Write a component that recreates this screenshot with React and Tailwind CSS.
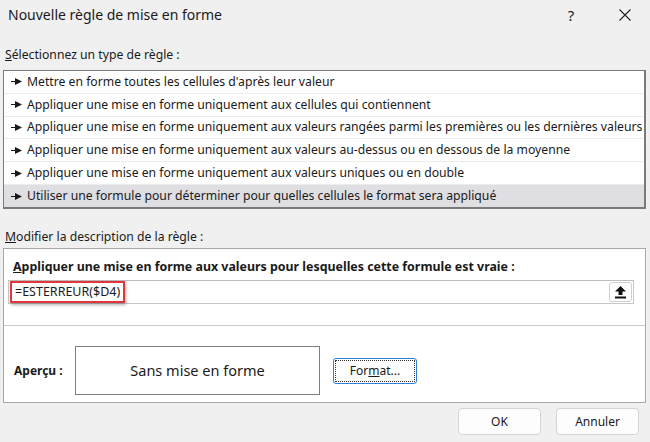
import React from "react";

const rules = [
  "Mettre en forme toutes les cellules d'après leur valeur",
  "Appliquer une mise en forme uniquement aux cellules qui contiennent",
  "Appliquer une mise en forme uniquement aux valeurs rangées parmi les premières ou les dernières valeurs",
  "Appliquer une mise en forme uniquement aux valeurs au-dessus ou en dessous de la moyenne",
  "Appliquer une mise en forme uniquement aux valeurs uniques ou en double",
  "Utiliser une formule pour déterminer pour quelles cellules le format sera appliqué",
];

// little "►" bullet with a stem, as drawn by Excel
const Bullet = () => (
  <svg width="11" height="7" viewBox="0 0 11 7" className="shrink-0">
    <rect x="0" y="3" width="5" height="1" fill="#1a1a1a" />
    <polygon points="4,0 11,3.5 4,7" fill="#1a1a1a" />
  </svg>
);

const UploadIcon = () => (
  <svg width="11" height="13" viewBox="0 0 11 13">
    <polygon points="5.5,0 11,5.5 7.5,5.5 7.5,9 3.5,9 3.5,5.5 0,5.5" fill="#111" />
    <rect x="0" y="10.5" width="11" height="2" fill="#111" />
  </svg>
);

const App = () => {
  return (
    <div className="w-[650px] h-[442px] bg-[#f0f0f0] overflow-hidden text-[#1a1a1a] font-['Noto_Sans','Liberation_Sans',sans-serif]">
      {/* Title bar */}
      <div className="h-[30px] flex items-center pl-[8px]">
        <div className="text-[14px] leading-[20px] flex-1">Nouvelle règle de mise en forme</div>
        <div className="w-[20px] text-center text-[15px] leading-[20px] mr-[38px]">?</div>
        <svg width="12" height="12" viewBox="0 0 12 12" className="mr-[19px]">
          <path d="M0.5 0.5 L11.5 11.5 M11.5 0.5 L0.5 11.5" stroke="#222" strokeWidth="1.1" fill="none" />
        </svg>
      </div>

      {/* Rule type */}
      <div className="h-[40px] pt-[16px] pl-[5px] text-[12.2px] leading-[18px]">
        <span className="underline">S</span>électionnez un type de règle :
      </div>
      <div className="mx-[3px] w-[643px] h-[139px] bg-white border border-[#7a7a7a] border-r-2 border-b-2 flex flex-col">
        {rules.map((r, i) => (
          <div
            key={i}
            className={
              i === 5
                ? "h-[22px] flex items-center gap-[5px] pl-[7px] bg-[#dedee3] text-[12.2px] whitespace-nowrap"
                : "h-[23px] flex items-center gap-[5px] pl-[7px] border-b border-[#ececec] text-[12.2px] whitespace-nowrap"
            }
          >
            <Bullet />
            <span>{r}</span>
          </div>
        ))}
      </div>

      {/* Rule description */}
      <div className="h-[39px] pt-[19px] pl-[5px] text-[12.2px] leading-[18px]">
        <span className="underline">M</span>odifier la description de la règle :
      </div>
      <div className="mx-[3px] w-[643px] h-[155px] bg-white border border-[#a8a8a8] flex flex-col">
        <div className="pt-[9px] pl-[9px] text-[12.4px] leading-[18px] font-bold">
          <span className="underline">A</span>ppliquer une mise en forme aux valeurs pour lesquelles cette formule est vraie :
        </div>
        <div className="ml-[4px] mt-[4px] w-[626px] h-[24px] border border-[#c8c8c8] border-t-[#bdbdbd] flex items-center">
          <div className="ml-[1px] h-[22px] px-[3px] flex items-center border-2 border-[#e0373c] shadow-[1px_2px_3px_rgba(0,0,0,0.3)] text-[12.5px] whitespace-nowrap">
            =ESTERREUR($D4)
          </div>
          <div className="flex-1" />
          <div className="mr-[1px] w-[23px] h-[20px] rounded-[3px] border border-[#cfcfcf] bg-white flex items-center justify-center">
            <UploadIcon />
          </div>
        </div>
        <div className="mt-[21px] h-px bg-[#c8c8c8]" />
        <div className="mt-[20px] flex items-center">
          <div className="w-[71px] pl-[10px] text-[12px] font-bold">Aperçu :</div>
          <div className="w-[245px] h-[49px] border border-[#7f7f7f] flex items-center justify-center text-[14.5px]">
            Sans mise en forme
          </div>
          <div className="ml-[13px] w-[84px] h-[26px] rounded-[3px] border border-[#2f7fd6] p-px">
            <div className="w-full h-full border border-dotted border-[#333] flex items-center justify-center text-[12px]">
              For<span className="underline">m</span>at...
            </div>
          </div>
        </div>
      </div>

      {/* Buttons */}
      <div className="mt-[5px] pr-[11px] flex justify-end gap-[15px]">
        <div className="w-[83px] h-[27px] rounded-[4px] border border-[#d4d4d4] bg-[#fdfdfd] flex items-center justify-center text-[12px]">
          OK
        </div>
        <div className="w-[83px] h-[27px] rounded-[4px] border border-[#d4d4d4] bg-[#fdfdfd] flex items-center justify-center text-[12px]">
          Annuler
        </div>
      </div>
    </div>
  );
};

export default App;
